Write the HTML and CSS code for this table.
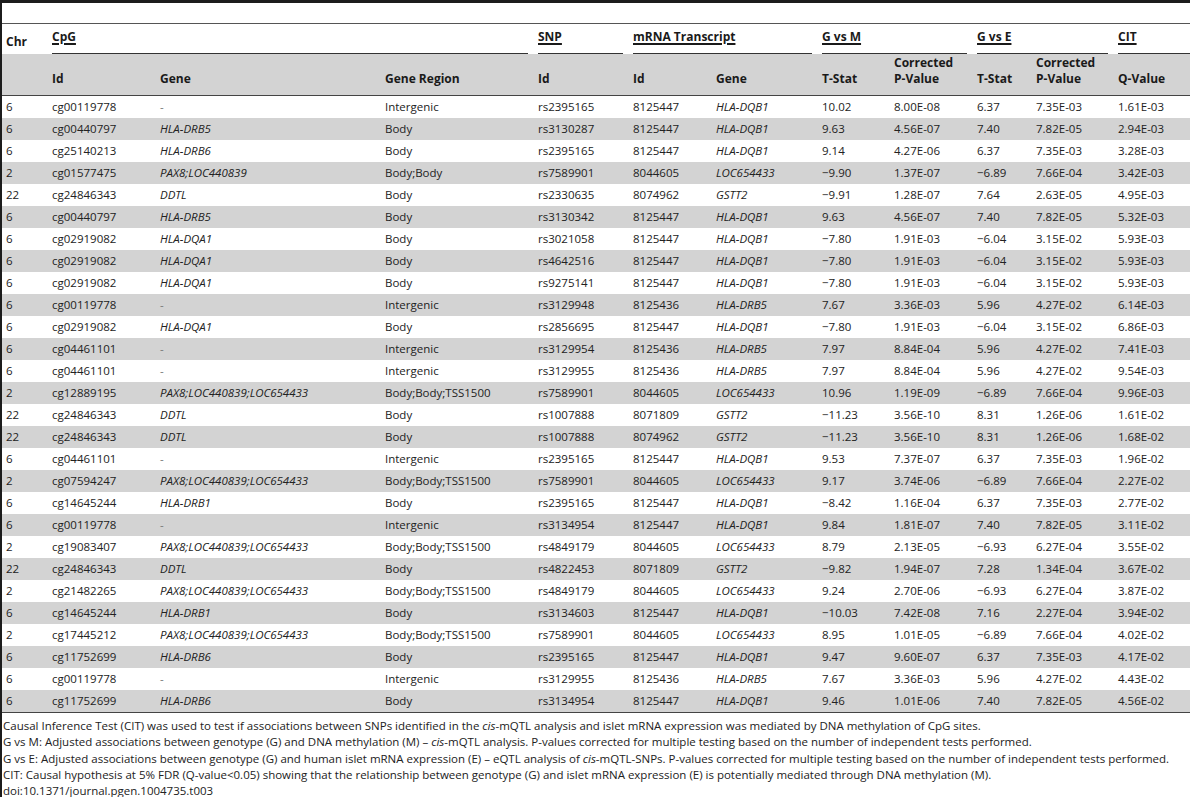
FILE: index.html
```html
<!DOCTYPE html>
<html>
<head>
<meta charset="utf-8">
<link rel="stylesheet" href="styles.css">
</head>
<body>
<div class="page">
  <div class="topgap"></div>
  <table class="tbl">
    <colgroup>
      <col class="c1"><col class="c2"><col class="c3"><col class="c4"><col class="c5"><col class="c6">
      <col class="c7"><col class="c8"><col class="c9"><col class="c10"><col class="c11"><col class="c12">
    </colgroup>
    <thead>
      <tr class="grow">
        <th class="chr">Chr</th>
        <th colspan="3"><span class="grp"><u>CpG</u></span></th>
        <th><span class="grp"><u>SNP</u></span></th>
        <th colspan="2"><span class="grp"><u>mRNA Transcript</u></span></th>
        <th colspan="2"><span class="grp"><u>G vs M</u></span></th>
        <th colspan="2"><span class="grp"><u>G vs E</u></span></th>
        <th><span class="grp last"><u>CIT</u></span></th>
      </tr>
      <tr class="srow">
        <th></th><th>Id</th><th>Gene</th><th>Gene Region</th><th>Id</th><th>Id</th><th>Gene</th>
        <th>T-Stat</th><th>Corrected<br>P-Value</th><th>T-Stat</th><th>Corrected<br>P-Value</th><th>Q-Value</th>
      </tr>
    </thead>
    <tbody>
      <tr><td>6</td><td>cg00119778</td><td class="dash">-</td><td>Intergenic</td><td>rs2395165</td><td>8125447</td><td><i>HLA-DQB1</i></td><td>10.02</td><td>8.00E-08</td><td>6.37</td><td>7.35E-03</td><td>1.61E-03</td></tr>
      <tr><td>6</td><td>cg00440797</td><td><i>HLA-DRB5</i></td><td>Body</td><td>rs3130287</td><td>8125447</td><td><i>HLA-DQB1</i></td><td>9.63</td><td>4.56E-07</td><td>7.40</td><td>7.82E-05</td><td>2.94E-03</td></tr>
      <tr><td>6</td><td>cg25140213</td><td><i>HLA-DRB6</i></td><td>Body</td><td>rs2395165</td><td>8125447</td><td><i>HLA-DQB1</i></td><td>9.14</td><td>4.27E-06</td><td>6.37</td><td>7.35E-03</td><td>3.28E-03</td></tr>
      <tr><td>2</td><td>cg01577475</td><td><i>PAX8;LOC440839</i></td><td>Body;Body</td><td>rs7589901</td><td>8044605</td><td><i>LOC654433</i></td><td>−9.90</td><td>1.37E-07</td><td>−6.89</td><td>7.66E-04</td><td>3.42E-03</td></tr>
      <tr><td>22</td><td>cg24846343</td><td><i>DDTL</i></td><td>Body</td><td>rs2330635</td><td>8074962</td><td><i>GSTT2</i></td><td>−9.91</td><td>1.28E-07</td><td>7.64</td><td>2.63E-05</td><td>4.95E-03</td></tr>
      <tr><td>6</td><td>cg00440797</td><td><i>HLA-DRB5</i></td><td>Body</td><td>rs3130342</td><td>8125447</td><td><i>HLA-DQB1</i></td><td>9.63</td><td>4.56E-07</td><td>7.40</td><td>7.82E-05</td><td>5.32E-03</td></tr>
      <tr><td>6</td><td>cg02919082</td><td><i>HLA-DQA1</i></td><td>Body</td><td>rs3021058</td><td>8125447</td><td><i>HLA-DQB1</i></td><td>−7.80</td><td>1.91E-03</td><td>−6.04</td><td>3.15E-02</td><td>5.93E-03</td></tr>
      <tr><td>6</td><td>cg02919082</td><td><i>HLA-DQA1</i></td><td>Body</td><td>rs4642516</td><td>8125447</td><td><i>HLA-DQB1</i></td><td>−7.80</td><td>1.91E-03</td><td>−6.04</td><td>3.15E-02</td><td>5.93E-03</td></tr>
      <tr><td>6</td><td>cg02919082</td><td><i>HLA-DQA1</i></td><td>Body</td><td>rs9275141</td><td>8125447</td><td><i>HLA-DQB1</i></td><td>−7.80</td><td>1.91E-03</td><td>−6.04</td><td>3.15E-02</td><td>5.93E-03</td></tr>
      <tr><td>6</td><td>cg00119778</td><td class="dash">-</td><td>Intergenic</td><td>rs3129948</td><td>8125436</td><td><i>HLA-DRB5</i></td><td>7.67</td><td>3.36E-03</td><td>5.96</td><td>4.27E-02</td><td>6.14E-03</td></tr>
      <tr><td>6</td><td>cg02919082</td><td><i>HLA-DQA1</i></td><td>Body</td><td>rs2856695</td><td>8125447</td><td><i>HLA-DQB1</i></td><td>−7.80</td><td>1.91E-03</td><td>−6.04</td><td>3.15E-02</td><td>6.86E-03</td></tr>
      <tr><td>6</td><td>cg04461101</td><td class="dash">-</td><td>Intergenic</td><td>rs3129954</td><td>8125436</td><td><i>HLA-DRB5</i></td><td>7.97</td><td>8.84E-04</td><td>5.96</td><td>4.27E-02</td><td>7.41E-03</td></tr>
      <tr><td>6</td><td>cg04461101</td><td class="dash">-</td><td>Intergenic</td><td>rs3129955</td><td>8125436</td><td><i>HLA-DRB5</i></td><td>7.97</td><td>8.84E-04</td><td>5.96</td><td>4.27E-02</td><td>9.54E-03</td></tr>
      <tr><td>2</td><td>cg12889195</td><td><i>PAX8;LOC440839;LOC654433</i></td><td>Body;Body;TSS1500</td><td>rs7589901</td><td>8044605</td><td><i>LOC654433</i></td><td>10.96</td><td>1.19E-09</td><td>−6.89</td><td>7.66E-04</td><td>9.96E-03</td></tr>
      <tr><td>22</td><td>cg24846343</td><td><i>DDTL</i></td><td>Body</td><td>rs1007888</td><td>8071809</td><td><i>GSTT2</i></td><td>−11.23</td><td>3.56E-10</td><td>8.31</td><td>1.26E-06</td><td>1.61E-02</td></tr>
      <tr><td>22</td><td>cg24846343</td><td><i>DDTL</i></td><td>Body</td><td>rs1007888</td><td>8074962</td><td><i>GSTT2</i></td><td>−11.23</td><td>3.56E-10</td><td>8.31</td><td>1.26E-06</td><td>1.68E-02</td></tr>
      <tr><td>6</td><td>cg04461101</td><td class="dash">-</td><td>Intergenic</td><td>rs2395165</td><td>8125447</td><td><i>HLA-DQB1</i></td><td>9.53</td><td>7.37E-07</td><td>6.37</td><td>7.35E-03</td><td>1.96E-02</td></tr>
      <tr><td>2</td><td>cg07594247</td><td><i>PAX8;LOC440839;LOC654433</i></td><td>Body;Body;TSS1500</td><td>rs7589901</td><td>8044605</td><td><i>LOC654433</i></td><td>9.17</td><td>3.74E-06</td><td>−6.89</td><td>7.66E-04</td><td>2.27E-02</td></tr>
      <tr><td>6</td><td>cg14645244</td><td><i>HLA-DRB1</i></td><td>Body</td><td>rs2395165</td><td>8125447</td><td><i>HLA-DQB1</i></td><td>−8.42</td><td>1.16E-04</td><td>6.37</td><td>7.35E-03</td><td>2.77E-02</td></tr>
      <tr><td>6</td><td>cg00119778</td><td class="dash">-</td><td>Intergenic</td><td>rs3134954</td><td>8125447</td><td><i>HLA-DQB1</i></td><td>9.84</td><td>1.81E-07</td><td>7.40</td><td>7.82E-05</td><td>3.11E-02</td></tr>
      <tr><td>2</td><td>cg19083407</td><td><i>PAX8;LOC440839;LOC654433</i></td><td>Body;Body;TSS1500</td><td>rs4849179</td><td>8044605</td><td><i>LOC654433</i></td><td>8.79</td><td>2.13E-05</td><td>−6.93</td><td>6.27E-04</td><td>3.55E-02</td></tr>
      <tr><td>22</td><td>cg24846343</td><td><i>DDTL</i></td><td>Body</td><td>rs4822453</td><td>8071809</td><td><i>GSTT2</i></td><td>−9.82</td><td>1.94E-07</td><td>7.28</td><td>1.34E-04</td><td>3.67E-02</td></tr>
      <tr><td>2</td><td>cg21482265</td><td><i>PAX8;LOC440839;LOC654433</i></td><td>Body;Body;TSS1500</td><td>rs4849179</td><td>8044605</td><td><i>LOC654433</i></td><td>9.24</td><td>2.70E-06</td><td>−6.93</td><td>6.27E-04</td><td>3.87E-02</td></tr>
      <tr><td>6</td><td>cg14645244</td><td><i>HLA-DRB1</i></td><td>Body</td><td>rs3134603</td><td>8125447</td><td><i>HLA-DQB1</i></td><td>−10.03</td><td>7.42E-08</td><td>7.16</td><td>2.27E-04</td><td>3.94E-02</td></tr>
      <tr><td>2</td><td>cg17445212</td><td><i>PAX8;LOC440839;LOC654433</i></td><td>Body;Body;TSS1500</td><td>rs7589901</td><td>8044605</td><td><i>LOC654433</i></td><td>8.95</td><td>1.01E-05</td><td>−6.89</td><td>7.66E-04</td><td>4.02E-02</td></tr>
      <tr><td>6</td><td>cg11752699</td><td><i>HLA-DRB6</i></td><td>Body</td><td>rs2395165</td><td>8125447</td><td><i>HLA-DQB1</i></td><td>9.47</td><td>9.60E-07</td><td>6.37</td><td>7.35E-03</td><td>4.17E-02</td></tr>
      <tr><td>6</td><td>cg00119778</td><td class="dash">-</td><td>Intergenic</td><td>rs3129955</td><td>8125436</td><td><i>HLA-DRB5</i></td><td>7.67</td><td>3.36E-03</td><td>5.96</td><td>4.27E-02</td><td>4.43E-02</td></tr>
      <tr><td>6</td><td>cg11752699</td><td><i>HLA-DRB6</i></td><td>Body</td><td>rs3134954</td><td>8125447</td><td><i>HLA-DQB1</i></td><td>9.46</td><td>1.01E-06</td><td>7.40</td><td>7.82E-05</td><td>4.56E-02</td></tr>
    </tbody>
  </table>
  <div class="notes">
    <p>Causal Inference Test (CIT) was used to test if associations between SNPs identified in the <i>cis</i>-mQTL analysis and islet mRNA expression was mediated by DNA methylation of CpG sites.</p>
    <p>G vs M: Adjusted associations between genotype (G) and DNA methylation (M) – <i>cis</i>-mQTL analysis. P-values corrected for multiple testing based on the number of independent tests performed.</p>
    <p>G vs E: Adjusted associations between genotype (G) and human islet mRNA expression (E) – eQTL analysis of <i>cis</i>-mQTL-SNPs. P-values corrected for multiple testing based on the number of independent tests performed.</p>
    <p>CIT: Causal hypothesis at 5% FDR (Q-value&lt;0.05) showing that the relationship between genotype (G) and islet mRNA expression (E) is potentially mediated through DNA methylation (M).</p>
    <p>doi:10.1371/journal.pgen.1004735.t003</p>
  </div>
</div>
</body>
</html>
```

FILE: styles.css
```css
html, body {
  margin: 0;
  padding: 0;
  background: #fff;
}

.page {
  width: 1188px;
  height: 794px;
  border-top: 3px solid #1c1c1c;
  border-left: 2px solid #1c1c1c;
  font-family: "Open Sans", "DejaVu Sans", sans-serif;
  font-size: 11.5px;
  color: #222;
}

.topgap {
  height: 20px;
  border-bottom: 1px solid #555;
}

.tbl {
  width: 1188px;
  table-layout: fixed;
  border-collapse: separate;
  border-spacing: 0;
}

.c1 { width: 46px; }
.c2 { width: 108px; }
.c3 { width: 225px; }
.c4 { width: 153px; }
.c5 { width: 95px; }
.c6 { width: 83px; }
.c7 { width: 106px; }
.c8 { width: 72px; }
.c9 { width: 83px; }
.c10 { width: 59px; }
.c11 { width: 82px; }
.c12 { width: 76px; }

.tbl th {
  font-size: 12px;
  font-weight: 700;
  text-align: left;
  vertical-align: bottom;
  white-space: nowrap;
  line-height: 16px;
  color: #1a1a1a;
}

.grow th {
  padding: 5px 0 0 0;
}

.grow th.chr {
  padding: 0 4px 4px 4px;
}

.grp {
  display: block;
  margin: 0 6px 0 4px;
  padding-bottom: 8px;
  border-bottom: 1px solid #333;
}

.grp.last {
  margin-right: 0;
}

.grp u {
  text-decoration: underline;
  text-decoration-thickness: 2px;
  text-underline-offset: 1.5px;
}

.srow th {
  background: #d3d3d3;
  padding: 1px 4px 8px 4px;
  border-bottom: 1px solid #444;
}

.tbl td {
  padding: 0 4px;
  line-height: 22px;
  white-space: nowrap;
  overflow: hidden;
}

.tbl td.dash {
  color: #777;
}

.tbl tbody tr:nth-child(even) td {
  background: #d3d3d3;
}

.tbl tbody tr:last-child td {
  border-bottom: 1px solid #444;
}

.notes {
  padding: 5px 0 0 1px;
}

.notes p {
  margin: 0;
  line-height: 16.3px;
  white-space: nowrap;
}
```
